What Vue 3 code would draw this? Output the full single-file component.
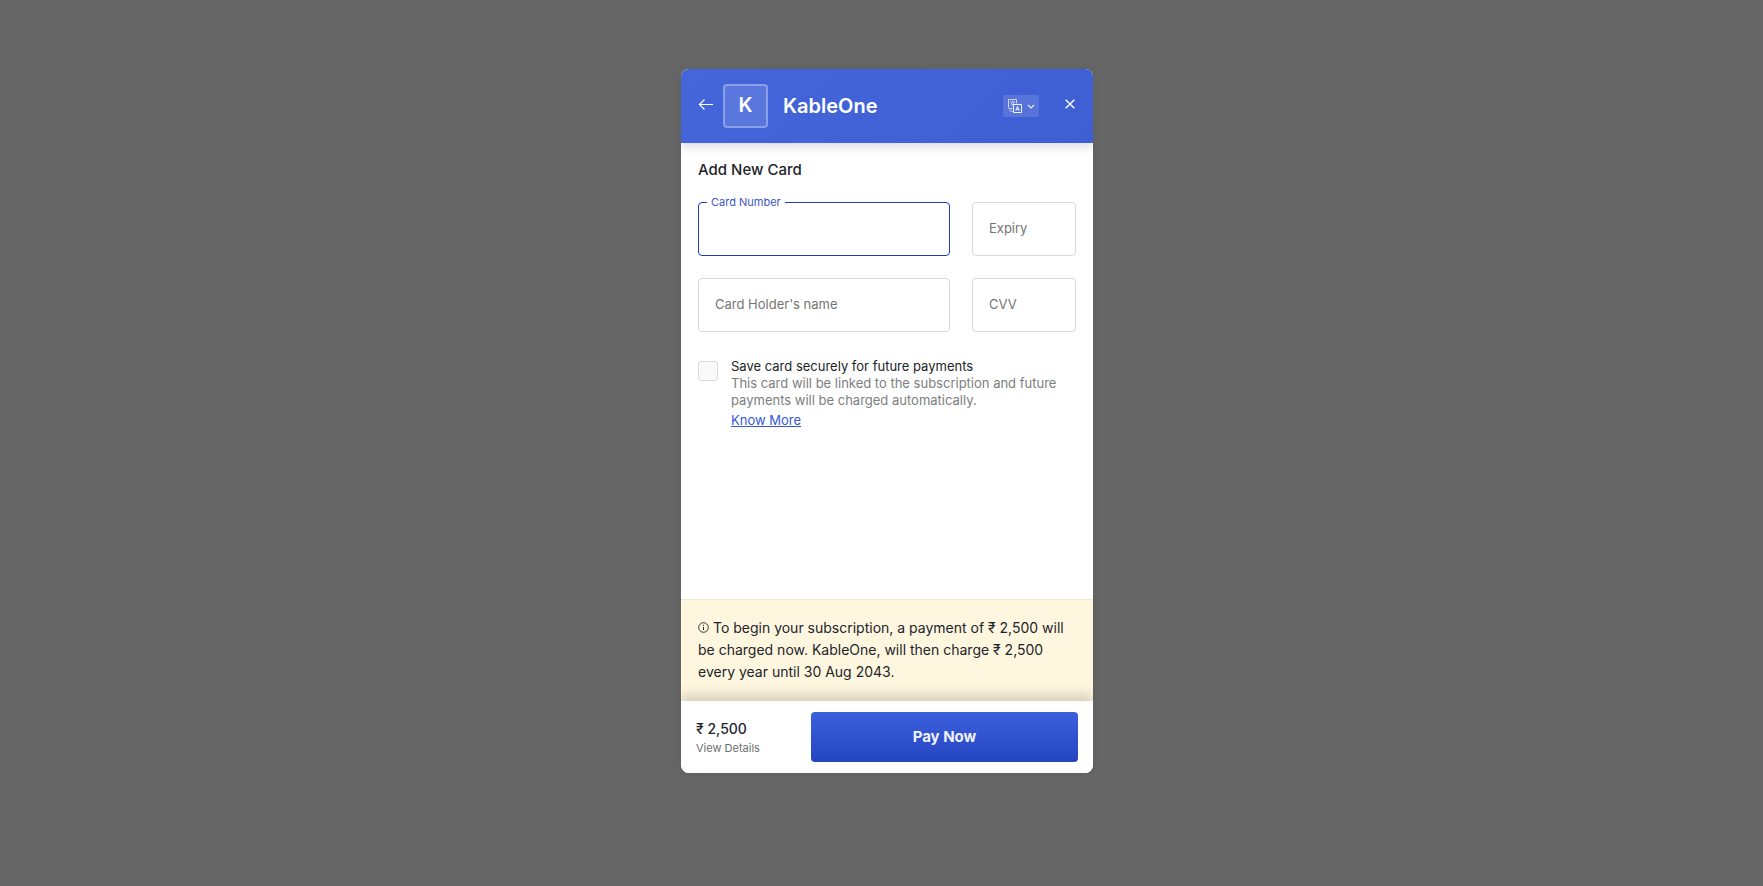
<script setup>
import { ref } from 'vue'

const merchant = 'KableOne'
const amount = '₹ 2,500'

const cardNumber = ref('')
const expiry = ref('')
const holder = ref('')
const cvv = ref('')
const saveCard = ref(false)
</script>

<template>
    <main class="overlay">
        <form class="checkout" @submit.prevent>
            <header class="header">
                <button type="button" class="icon-btn" aria-label="Back">
                    <svg width="16" height="14" viewBox="0 0 16 14" fill="none" stroke="currentColor" stroke-width="1.2">
                        <path d="M15 7.500H1.500M6.500 2.500l-5 5 5 5" />
                    </svg>
                </button>
                <div class="logo">K</div>
                <h1 class="merchant">{{ merchant }}</h1>
                <button type="button" class="language" aria-label="Language">
                    <svg width="16" height="16" viewBox="0 0 16 16" fill="none" stroke="currentColor">
                        <path d="M5.500 10.500h-3a1 1 0 0 1-1-1v-8h8v4" stroke-width=".8" />
                        <path d="M3.500 4h4.500M5.500 3v1M7 4c-.5 2-2 3.200-3.200 3.500M4 5c.5 1 1.200 1.500 2 2" stroke-width=".7" />
                        <path d="M6.500 6.500h8v8h-8z" />
                        <path d="M8.800 12.700l1.700-4.200 1.700 4.200M9.300 11.400h2.400" />
                        <path d="M3 11.500c0 1.500.5 2 2.500 2" stroke-width=".8" />
                    </svg>
                    <svg width="8" height="8" viewBox="0 0 8 8" fill="none" stroke="currentColor" stroke-width="1.100">
                        <path d="M1 3l3 3 3-3" />
                    </svg>
                </button>
                <button type="button" class="icon-btn" aria-label="Close">
                    <svg width="10" height="10" viewBox="0 0 10 10" fill="none" stroke="currentColor" stroke-width="1.400">
                        <path d="M.7.7l8.600 8.600M9.300.7L.7 9.300" />
                    </svg>
                </button>
            </header>

            <section class="body">
                <h2 class="title">Add New Card</h2>

                <div class="fields">
                    <div class="field active">
                        <label for="number">Card Number</label>
                        <input id="number" v-model="cardNumber" type="text" inputmode="numeric" />
                    </div>
                    <div class="field">
                        <input v-model="expiry" type="text" placeholder="Expiry" aria-label="Expiry" />
                    </div>
                    <div class="field">
                        <input v-model="holder" type="text" placeholder="Card Holder's name" aria-label="Card Holder's name" />
                    </div>
                    <div class="field">
                        <input v-model="cvv" type="text" placeholder="CVV" aria-label="CVV" />
                    </div>
                </div>

                <div class="save">
                    <input id="save" v-model="saveCard" type="checkbox" />
                    <div class="save-text">
                        <label for="save">Save card securely for future payments</label>
                        <p>This card will be linked to the subscription and future payments will be charged automatically.</p>
                        <a href="#">Know More</a>
                    </div>
                </div>
            </section>

            <p class="notice">
                <svg width="11" height="11" viewBox="0 0 11 11" fill="none" stroke="currentColor">
                    <circle cx="5.500" cy="5.500" r="4.800" stroke-width=".9" />
                    <path d="M5.500 5v3M5.500 2.800v1.100" />
                </svg>
                To begin your subscription, a payment of {{ amount }} will be charged now. {{ merchant }}, will then charge
                {{ amount }} every year until 30 Aug 2043.
            </p>

            <footer class="footer">
                <div class="total">
                    <strong>{{ amount }}</strong>
                    <button type="button" class="details">View Details</button>
                </div>
                <button type="submit" class="pay">Pay Now</button>
            </footer>
        </form>
    </main>
</template>

<style>
body {
    margin: 0;
    background: #666;
}
</style>

<style scoped>
* {
    box-sizing: border-box;
}

.overlay {
    display: flex;
    align-items: center;
    justify-content: center;
    min-height: 100vh;
    padding: 0 0 44px 11px;
    font-family: Inter, "Liberation Sans", sans-serif;
    color: #212529;
}

.checkout {
    display: flex;
    flex-direction: column;
    width: 100%;
    max-width: 412px;
    min-height: 704px;
    background: #fff;
    border-radius: 8px;
    overflow: hidden;
    box-shadow: 0 0 12px rgba(0, 0, 0, 0.08);
}

button {
    padding: 0;
    border: none;
    background: none;
    font-family: inherit;
    color: inherit;
    cursor: pointer;
}

svg {
    display: block;
}

/* header */
.header {
    display: flex;
    align-items: center;
    height: 74px;
    padding: 0 18px 0 17px;
    color: #fff;
    background: linear-gradient(135deg, #4466da, #3e5fd3);
    box-shadow: 0 4px 10px rgba(0, 0, 0, 0.14);
}

.icon-btn {
    padding-bottom: 4px;
}

.logo {
    display: flex;
    align-items: center;
    justify-content: center;
    width: 45px;
    height: 44px;
    margin: 0 15px 0 9px;
    padding-bottom: 2px;
    border: 2px solid rgba(255, 255, 255, 0.3);
    border-radius: 4px;
    background: rgba(255, 255, 255, 0.12);
    font-size: 20px;
    font-weight: 600;
}

.merchant {
    flex: 1;
    margin: 0;
    font-size: 20px;
    line-height: 24px;
    font-weight: 600;
}

.language {
    display: flex;
    align-items: center;
    justify-content: center;
    gap: 4px;
    width: 36px;
    height: 22px;
    margin-right: 26px;
    border-radius: 2px;
    background: rgba(255, 255, 255, 0.12);
    color: rgba(255, 255, 255, 0.9);
}

/* card form */
.body {
    flex: 1;
    padding: 17px;
}

.title {
    margin: 0 0 22px;
    font-size: 15px;
    line-height: 20px;
    font-weight: 500;
}

.fields {
    display: grid;
    grid-template-columns: 1fr 104px;
    gap: 22px;
}

.field {
    position: relative;
}

.field input {
    display: block;
    width: 100%;
    height: 54px;
    padding: 0 16px 2px;
    border: 1px solid #d9d9d9;
    border-radius: 4px;
    outline: none;
    background: #fff;
    font-family: inherit;
    font-size: 13px;
}

.field input::placeholder {
    color: #757575;
    opacity: 1;
}

.field.active input {
    border-color: #1f3fb5;
}

/* floating label over the border */
.field label {
    position: absolute;
    top: -8px;
    left: 9px;
    padding: 0 4px;
    background: #fff;
    color: #3c57c4;
    font-size: 11px;
    line-height: 16px;
}

.save {
    display: flex;
    gap: 13px;
    margin-top: 26px;
    font-size: 13px;
    line-height: 17px;
}

.save input {
    flex: none;
    appearance: none;
    width: 20px;
    height: 20px;
    margin: 3px 0 0;
    border: 1px solid #d9d9d9;
    border-radius: 3px;
    background: #f9f9f9;
}

.save input:checked {
    background: #3357dc;
}

.save label {
    display: block;
}

.save p {
    margin: 0 0 3px;
    color: #7c7e80;
}

.save a {
    display: inline-block;
    color: #3357dc;
}

/* subscription notice */
.notice {
    margin: 0;
    padding: 17px 17px 18px;
    border-top: 1px solid #efe7d3;
    background: #fff6e0;
    font-size: 14px;
    line-height: 22px;
}

.notice svg {
    display: inline-block;
}

.footer {
    display: flex;
    align-items: center;
    justify-content: space-between;
    height: 72px;
    padding: 0 15px;
    background: #fff;
    box-shadow: 0 -6px 12px rgba(0, 0, 0, 0.17);
}

.total {
    display: flex;
    flex-direction: column;
    align-items: flex-start;
    padding-top: 2px;
}

.total strong {
    font-size: 14px;
    line-height: 20px;
    font-weight: 500;
}

.details {
    color: #6c6e70;
    font-size: 11px;
    line-height: 18px;
}

.pay {
    width: 267px;
    height: 50px;
    padding-bottom: 2px;
    border-radius: 4px;
    background: linear-gradient(#3c60dc, #2445c2);
    color: #f0f2fb;
    font-size: 15px;
    font-weight: 700;
}
</style>
